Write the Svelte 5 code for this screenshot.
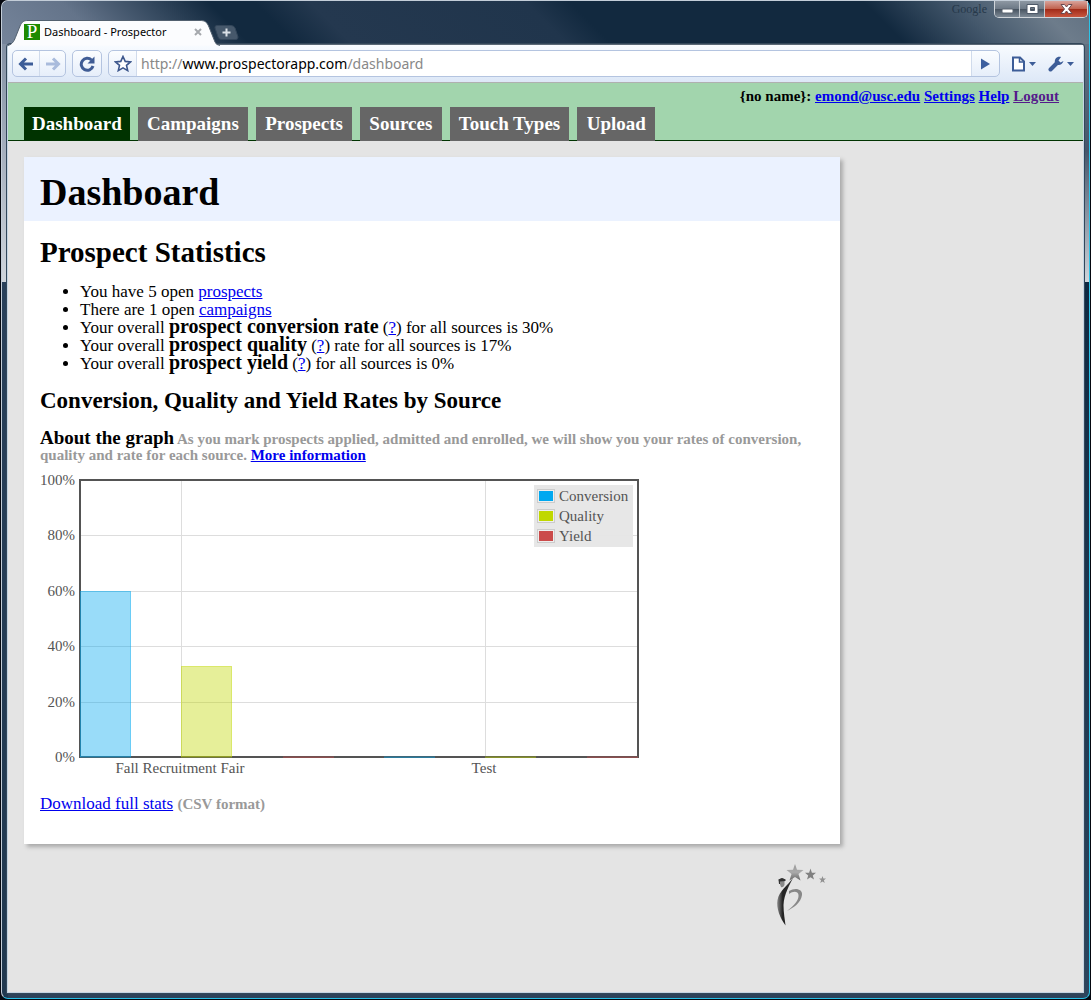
<script>
  const tabs = ['Dashboard', 'Campaigns', 'Prospects', 'Sources', 'Touch Types', 'Upload'];
  const series = [
    { name: 'Conversion', color: '#00a8f0', values: [60, 0] },
    { name: 'Quality', color: '#c0d800', values: [33, 0] },
    { name: 'Yield', color: '#cb4b4b', values: [0, 0] }
  ];
  const sources = [
    { name: 'Fall Recruitment Fair', x: 141 },
    { name: 'Test', x: 445 }
  ];
  const plot = { left: 40, right: 598, top: 9, bottom: 286 };
  const barWidth = 51;
  const yFor = (v) => Math.round(plot.bottom - (v / 100) * (plot.bottom - plot.top));
  const ticks = [100, 80, 60, 40, 20, 0];
  const bars = sources.flatMap((source, i) =>
    series.map((s, j) => ({
      x: source.x + (j - 1) * 102 + (j === 0 ? 1 : 0),
      y: yFor(s.values[i]),
      h: plot.bottom - yFor(s.values[i]),
      color: s.color
    }))
  );
</script>

<div class="window">
  <header class="titlebar">
    <div class="tab">
      <svg class="tab-shape" width="208" height="26" viewBox="0 0 208 26" aria-hidden="true">
        <path d="M0 25.500C5 24 6.500 20 8 16L12 6C14 1.500 16 .5 20 .5H192C197 .5 199 2 201 7L207 22Q208 25 212 25.500" fill="#fbfcfe" stroke="#52606f" />
      </svg>
      <span class="favicon">P</span>
      <span class="tab-title">Dashboard - Prospector</span>
      <button class="bare tab-close" aria-label="Close tab">
        <svg width="8" height="8" viewBox="0 0 8 8"><path d="M1 1L7 7M7 1L1 7" stroke="#a5a8ad" stroke-width="2" /></svg>
      </button>
    </div>
    <button class="bare new-tab" aria-label="New tab">
      <svg width="25" height="15" viewBox="0 0 25 15">
        <path d="M3 .5H17Q20 .5 21 3L24 12Q24 14.500 22 14.500H7Q5 14.500 4 12L1 3Q.5 .5 3 .5Z" fill="#46586b" stroke="#33465a" />
        <path d="M12.500 3.500V11.500M8.500 7.500H16.500" stroke="#dbe1e7" stroke-width="2" />
      </svg>
    </button>
    <span class="brand">Google</span>
    <div class="controls">
      <button class="bare ctl" aria-label="Minimize">
        <svg width="13" height="12" viewBox="0 0 13 12"><rect x="1" y="6" width="11" height="4" rx="1" fill="#fff" stroke="#5b6470" /></svg>
      </button>
      <button class="bare ctl" aria-label="Maximize">
        <svg width="13" height="12" viewBox="0 0 13 12"><path d="M1 1.500H12V10.500H1ZM4.500 4.500V7.500H8.500V4.500Z" fill="#fff" fill-rule="evenodd" stroke="#4e5968" /></svg>
      </button>
      <button class="bare ctl close" aria-label="Close">
        <svg width="13" height="12" viewBox="0 0 13 12"><path d="M1 1.500H4.500L6.500 4L8.500 1.500H12L8.500 6L12 10.500H8.500L6.500 8L4.500 10.500H1L4.500 6Z" fill="#fff" stroke="#6a4a50" /></svg>
      </button>
    </div>
  </header>

  <div class="frame">
    <div class="toolbar">
      <div class="group">
        <button class="bare nav-btn" aria-label="Back">
          <svg width="16" height="14" viewBox="0 0 16 14"><path d="M15 7H3M8 1.500L2.500 7L8 12.500" fill="none" stroke="#3d5d98" stroke-width="3" /></svg>
        </button>
        <button class="bare nav-btn" aria-label="Forward">
          <svg width="16" height="14" viewBox="0 0 16 14"><path d="M1 7H13M8 1.500L13.500 7L8 12.500" fill="none" stroke="#a9bbdc" stroke-width="3" /></svg>
        </button>
      </div>
      <button class="bare group reload" aria-label="Reload">
        <svg width="16" height="16" viewBox="0 0 16 16"><path d="M12.500 4A6 6 0 1 0 14 10" fill="none" stroke="#3f5c95" stroke-width="3" /><path d="M15.500 .5V7.500H8.500Z" fill="#3f5c95" /></svg>
      </button>
      <div class="group address">
        <button class="bare star" aria-label="Bookmark">
          <svg width="18" height="17" viewBox="0 0 18 17"><path d="M9 1.500L11.200 6.400L16.500 6.900L12.500 10.400L13.700 15.600L9 12.900L4.300 15.600L5.500 10.400L1.500 6.900L6.800 6.400Z" fill="#fff" stroke="#3c568c" stroke-width="1.600" /></svg>
        </button>
        <div class="url"><span>http://</span>www.prospectorapp.com<span>/dashboard</span></div>
        <button class="bare go" aria-label="Go">
          <svg width="11" height="12" viewBox="0 0 11 12"><path d="M1 .5L10 6L1 11.500Z" fill="#3d5f9f" /></svg>
        </button>
      </div>
      <button class="bare menu" aria-label="Page menu">
        <svg width="26" height="16" viewBox="0 0 26 16"><path d="M2 1.500H9L13 5.500V14.500H2Z" fill="#fff" stroke="#3d5d98" stroke-width="2" /><path d="M8.500 1.500V6H13" fill="none" stroke="#3d5d98" stroke-width="1.500" /><path d="M18 6H25L21.500 10Z" fill="#3d5d98" /></svg>
      </button>
      <button class="bare menu" aria-label="Settings menu">
        <svg width="27" height="16" viewBox="0 0 27 16"><path d="M2.500 13.500L9 7" stroke="#3d5d98" stroke-width="4" stroke-linecap="round" /><path d="M13 1C9 0 6 3 7 7C9 10 14 10 15.500 5L12.500 6.500L10.500 4.500Z" fill="#3d5d98" /><path d="M19 6H26L22.500 10Z" fill="#3d5d98" /></svg>
      </button>
    </div>

    <div class="page">
      <div class="site-header">
        <div class="user">
          {'{no name}:'} <a href="#account">emond@usc.edu</a> <a href="#settings">Settings</a> <a href="#help">Help</a> <a class="visited" href="#logout">Logout</a>
        </div>
        <nav>
          {#each tabs as tab, i}
            <a class:active={i === 0} href="#{tab}">{tab}</a>
          {/each}
        </nav>
      </div>

      <main>
        <div class="card">
          <h1>Dashboard</h1>
          <div class="content">
            <h2>Prospect Statistics</h2>
            <ul>
              <li>You have 5 open <a href="#prospects">prospects</a></li>
              <li>There are 1 open <a href="#campaigns">campaigns</a></li>
              <li>Your overall <strong>prospect conversion rate</strong> (<a href="#conversion">?</a>) for all sources is 30%</li>
              <li>Your overall <strong>prospect quality</strong> (<a href="#quality">?</a>) rate for all sources is 17%</li>
              <li>Your overall <strong>prospect yield</strong> (<a href="#yield">?</a>) for all sources is 0%</li>
            </ul>
            <h3>Conversion, Quality and Yield Rates by Source</h3>
            <p class="about">
              <strong>About the graph</strong> As you mark prospects applied, admitted and enrolled, we will show you your rates of conversion, quality and rate for each source. <a href="#more">More information</a>
            </p>
            <svg class="chart" width="600" height="308" viewBox="0 0 600 308" role="img" aria-label="Rates by source">
              {#each ticks as t}
                <text x="35" y={yFor(t) + 4} text-anchor="end">{t}%</text>
                <rect x={plot.left} y={yFor(t) - 1} width={plot.right - plot.left} height="1" fill="#ddd" />
              {/each}
              {#each sources as s}
                <rect x={s.x} y={plot.top} width="1" height={plot.bottom - plot.top} fill="#ddd" />
                <text x={s.x - 1} y="301" text-anchor="middle">{s.name}</text>
              {/each}
              <rect x={plot.left} y={plot.top - 1} width={plot.right - plot.left} height={plot.bottom - plot.top} fill="none" stroke="#545454" stroke-width="2" />
              {#each bars as b}
                <rect x={b.x} y={b.y - 1} width={barWidth} height={b.h} fill={b.color} fill-opacity="0.4" />
                <path d="M{b.x + 0.5} {plot.bottom - 1}V{b.y - 0.5}H{b.x + barWidth - 0.5}V{plot.bottom - 1}" fill="none" stroke={b.color} stroke-opacity="0.3" />
                <rect x={b.x} y={plot.bottom - 2} width={barWidth} height="2" fill={b.color} fill-opacity="0.25" />
              {/each}
              <rect x="494" y="13" width="99" height="62" fill="#e6e6e6" fill-opacity="0.95" />
              {#each series as s, i}
                <rect x="497.500" y={17.5 + i * 20} width="17" height="13" fill="#eee" stroke="#ccc" />
                <rect x="499" y={19 + i * 20} width="14" height="10" fill={s.color} />
                <text x="519" y={29 + i * 20}>{s.name}</text>
              {/each}
            </svg>
            <p class="download"><a href="#csv">Download full stats</a> <small>(CSV format)</small></p>
          </div>
        </div>
        <footer>
          <svg width="52" height="64" viewBox="0 0 52 64" role="img" aria-label="Logo">
            <defs>
              <linearGradient id="starFill" x1="0" y1="0" x2="0" y2="1"><stop offset="0" stop-color="#999" /><stop offset=".5" stop-color="#aaa" /><stop offset="1" stop-color="#666" /></linearGradient>
              <linearGradient id="figureFill" x1="0" y1="0" x2="1" y2="0"><stop offset="0" stop-color="#888" /><stop offset=".35" stop-color="#222" /><stop offset="1" stop-color="#333" /></linearGradient>
            </defs>
            <path d="M20 0L22 5.800L28.500 6L23.500 10L25.500 16.500L20 13L14.500 16.500L16.500 10L11.500 6L18 5.800Z" fill="url(#starFill)" />
            <path d="M35.500 4.500L36.900 8.700L41 8.800L37.800 11.400L39 15.500L35.500 13.200L32 15.500L33.200 11.400L30 8.800L34.100 8.700Z" fill="#808080" />
            <path d="M47.500 12L48.400 14.400L51 14.500L48.900 16.200L49.700 19L47.500 17.500L45.300 19L46.100 16.200L44 14.500L46.600 14.400Z" fill="#919191" />
            <path d="M3.500 15.500L7 14L10.500 15.500L9.500 17V21Q8 24 6 23L4.500 19Z" fill="#888" />
            <path d="M3.500 15.500L7 14L10.500 15.500V17L5 17.500V20H4Z" fill="#333" />
            <path d="M18 14C15 20 9 30 8.500 41C8.500 49 10 56 10.500 61.500C5 54 1 44 2.500 36C4 27 13 21 18 14Z" fill="url(#figureFill)" />
            <path d="M14 27C20 23 28 25 27 31C26 39 18 44 12 47C19 42 24 36 23.500 31C23 27 18 27 14 30Z" fill="#888" />
          </svg>
        </footer>
      </main>
    </div>
  </div>
</div>

<style>
  :global(body) {
    margin: 0;
    background: #05080f;
  }
  .window {
    box-sizing: border-box;
    min-height: calc(100vh - 1px);
    display: flex;
    flex-direction: column;
    padding: 0 5px 5px 5px;
    border: 1px solid #c3cdd8;
    border-right-color: #2cc4e8;
    border-bottom-color: #25bfe8;
    border-radius: 7px;
    margin: 0 1px 1px;
    background:
      linear-gradient(#75849a, #cfd5dc 281px, #29405a 281px, #20384f) left / 6px 100% no-repeat,
      linear-gradient(#6d7c8b, #46566b 150px, #cfd5dc 281px, #0f2942 281px, #2c455e) right / 6px 100% no-repeat,
      #2c425a;
  }
  .bare {
    border: 0;
    padding: 0;
    background: none;
    display: flex;
    align-items: center;
    justify-content: center;
  }
  .titlebar {
    height: 43px;
    display: flex;
    margin: 0 -5px;
    background: linear-gradient(45deg, #75849a 0, #64748a 9%, #12293f 22%, #12293f 26%, #24384f 31%, #20354c 50%, #12293f 54%, #12293f 80%, #44586c 88%, #6d7c8b 95%, #5f6f80 100%);
    border-radius: 6px 6px 0 0;
  }
  .tab {
    position: relative;
    box-sizing: border-box;
    width: 196px;
    height: 24px;
    margin: 19px 0 0 6px;
    padding: 0 2px 0 16px;
    display: flex;
    align-items: center;
    gap: 4px;
    z-index: 1;
  }
  .tab-shape {
    position: absolute;
    left: 0;
    top: 0;
    z-index: -1;
    overflow: visible;
  }
  .favicon {
    width: 16px;
    height: 16px;
    background: #1d8a00;
    color: #fff;
    font: 19px/16px 'Liberation Serif', serif;
    text-align: center;
  }
  .tab-title {
    flex: 1;
    font: 11px/16px 'Noto Sans', sans-serif;
    white-space: nowrap;
  }
  .new-tab {
    margin: 24px 0 0 10px;
    height: 15px;
  }
  .brand {
    margin-left: auto;
    margin-right: 7px;
    font: 12px/16px 'Liberation Serif', serif;
    color: #26384a;
  }
  .controls {
    display: flex;
    height: 16px;
    margin-right: 1px;
    border: 1px solid #d0d5da;
    border-top: 0;
    border-radius: 0 0 5px 5px;
    overflow: hidden;
  }
  .ctl {
    width: 25px;
    background: linear-gradient(#8d97a2, #6c7885 50%, #46525f 50%, #7d8995);
    border-right: 1px solid #c3c9cf;
  }
  .close {
    width: 42px;
    border: 0;
    background: linear-gradient(#d8a39b, #c0604c 50%, #a02a18 50%, #c8563f);
  }
  .frame {
    flex: 1;
    display: flex;
    flex-direction: column;
    border: 1px solid #c4d4e2;
    border-top: 1px solid #5a6876;
    outline: 1px solid #33475a;
    outline-offset: 0;
    border-radius: 3px 3px 0 0;
    background: #e4e4e4;
  }
  .toolbar {
    box-sizing: border-box;
    height: 38px;
    display: flex;
    align-items: center;
    gap: 6px;
    padding: 0 8px 0 4px;
    background: linear-gradient(#f8fbff, #dde8f7);
    border-bottom: 1px solid #b0b0b0;
  }
  .group {
    box-sizing: border-box;
    height: 27px;
    display: flex;
    border: 1px solid #b4c4e0;
    border-radius: 5px;
    background: linear-gradient(#fbfdff, #e6eefa);
  }
  .nav-btn {
    width: 26px;
  }
  .nav-btn + .nav-btn {
    border-left: 1px solid #d0dbec;
  }
  .reload {
    width: 30px;
  }
  .address {
    flex: 1;
    overflow: hidden;
  }
  .star {
    width: 27px;
  }
  .url {
    flex: 1;
    background: #fff;
    border-left: 1px solid #d0dbec;
    border-right: 1px solid #d0dbec;
    padding-left: 4px;
    font: 14px/25px 'Noto Sans', sans-serif;
    color: #000;
  }
  .url span {
    color: #888;
  }
  .go {
    width: 27px;
  }
  .menu {
    margin-left: 5px;
  }
  .page {
    flex: 1;
    font-family: 'Liberation Serif', serif;
    color: #000;
  }
  a {
    color: #00e;
  }
  .site-header {
    height: 57px;
    display: flex;
    flex-direction: column;
    justify-content: space-between;
    background: #a2d5ad;
    border-bottom: 1px solid #030;
  }
  .user {
    padding: 4px 24px 0 0;
    text-align: right;
    font-size: 15px;
    line-height: 18px;
    font-weight: bold;
  }
  .visited {
    color: #551a8b;
  }
  nav {
    display: flex;
    gap: 8px;
    max-width: 631px;
    margin: 0 16px -1px;
  }
  nav a {
    flex: 1 0 auto;
    padding: 0 8px;
    background: #666;
    color: #fff;
    font-size: 19px;
    font-weight: bold;
    line-height: 34px;
    text-align: center;
    text-decoration: none;
    white-space: nowrap;
  }
  nav a.active {
    flex-grow: 0;
    background: #030;
  }
  main {
    max-width: 816px;
    padding: 16px 16px 0;
  }
  .card {
    background: #fff;
    box-shadow: 3px 3px 4px #aaa;
  }
  h1 {
    margin: 0;
    padding: 0 16px;
    background: #ebf2ff;
    font-size: 38px;
    line-height: 70px;
    height: 64px;
  }
  .content {
    padding: 16px 16px 31px;
  }
  h2 {
    margin: 0;
    font-size: 29px;
    line-height: 30px;
  }
  ul {
    margin: 16px 0;
    padding-left: 40px;
    font-size: 17px;
    line-height: 18px;
  }
  li strong {
    font-size: 20px;
    line-height: 12px;
  }
  h3 {
    margin: 0;
    font-size: 23px;
    line-height: 24px;
  }
  .about {
    margin: 18px 0 9px;
    font-size: 15px;
    line-height: 16px;
    font-weight: bold;
    color: #999;
  }
  .about strong {
    font-size: 19px;
    line-height: 12px;
    color: #000;
  }
  .chart {
    display: block;
    font-size: 15px;
    fill: #545454;
  }
  .download {
    margin: 15px 0 0;
    font-size: 17px;
    line-height: 18px;
  }
  small {
    font-size: 15px;
    font-weight: bold;
    color: #999;
  }
  footer {
    display: flex;
    justify-content: flex-end;
    margin-top: 20px;
    padding-right: 13px;
  }
</style>
